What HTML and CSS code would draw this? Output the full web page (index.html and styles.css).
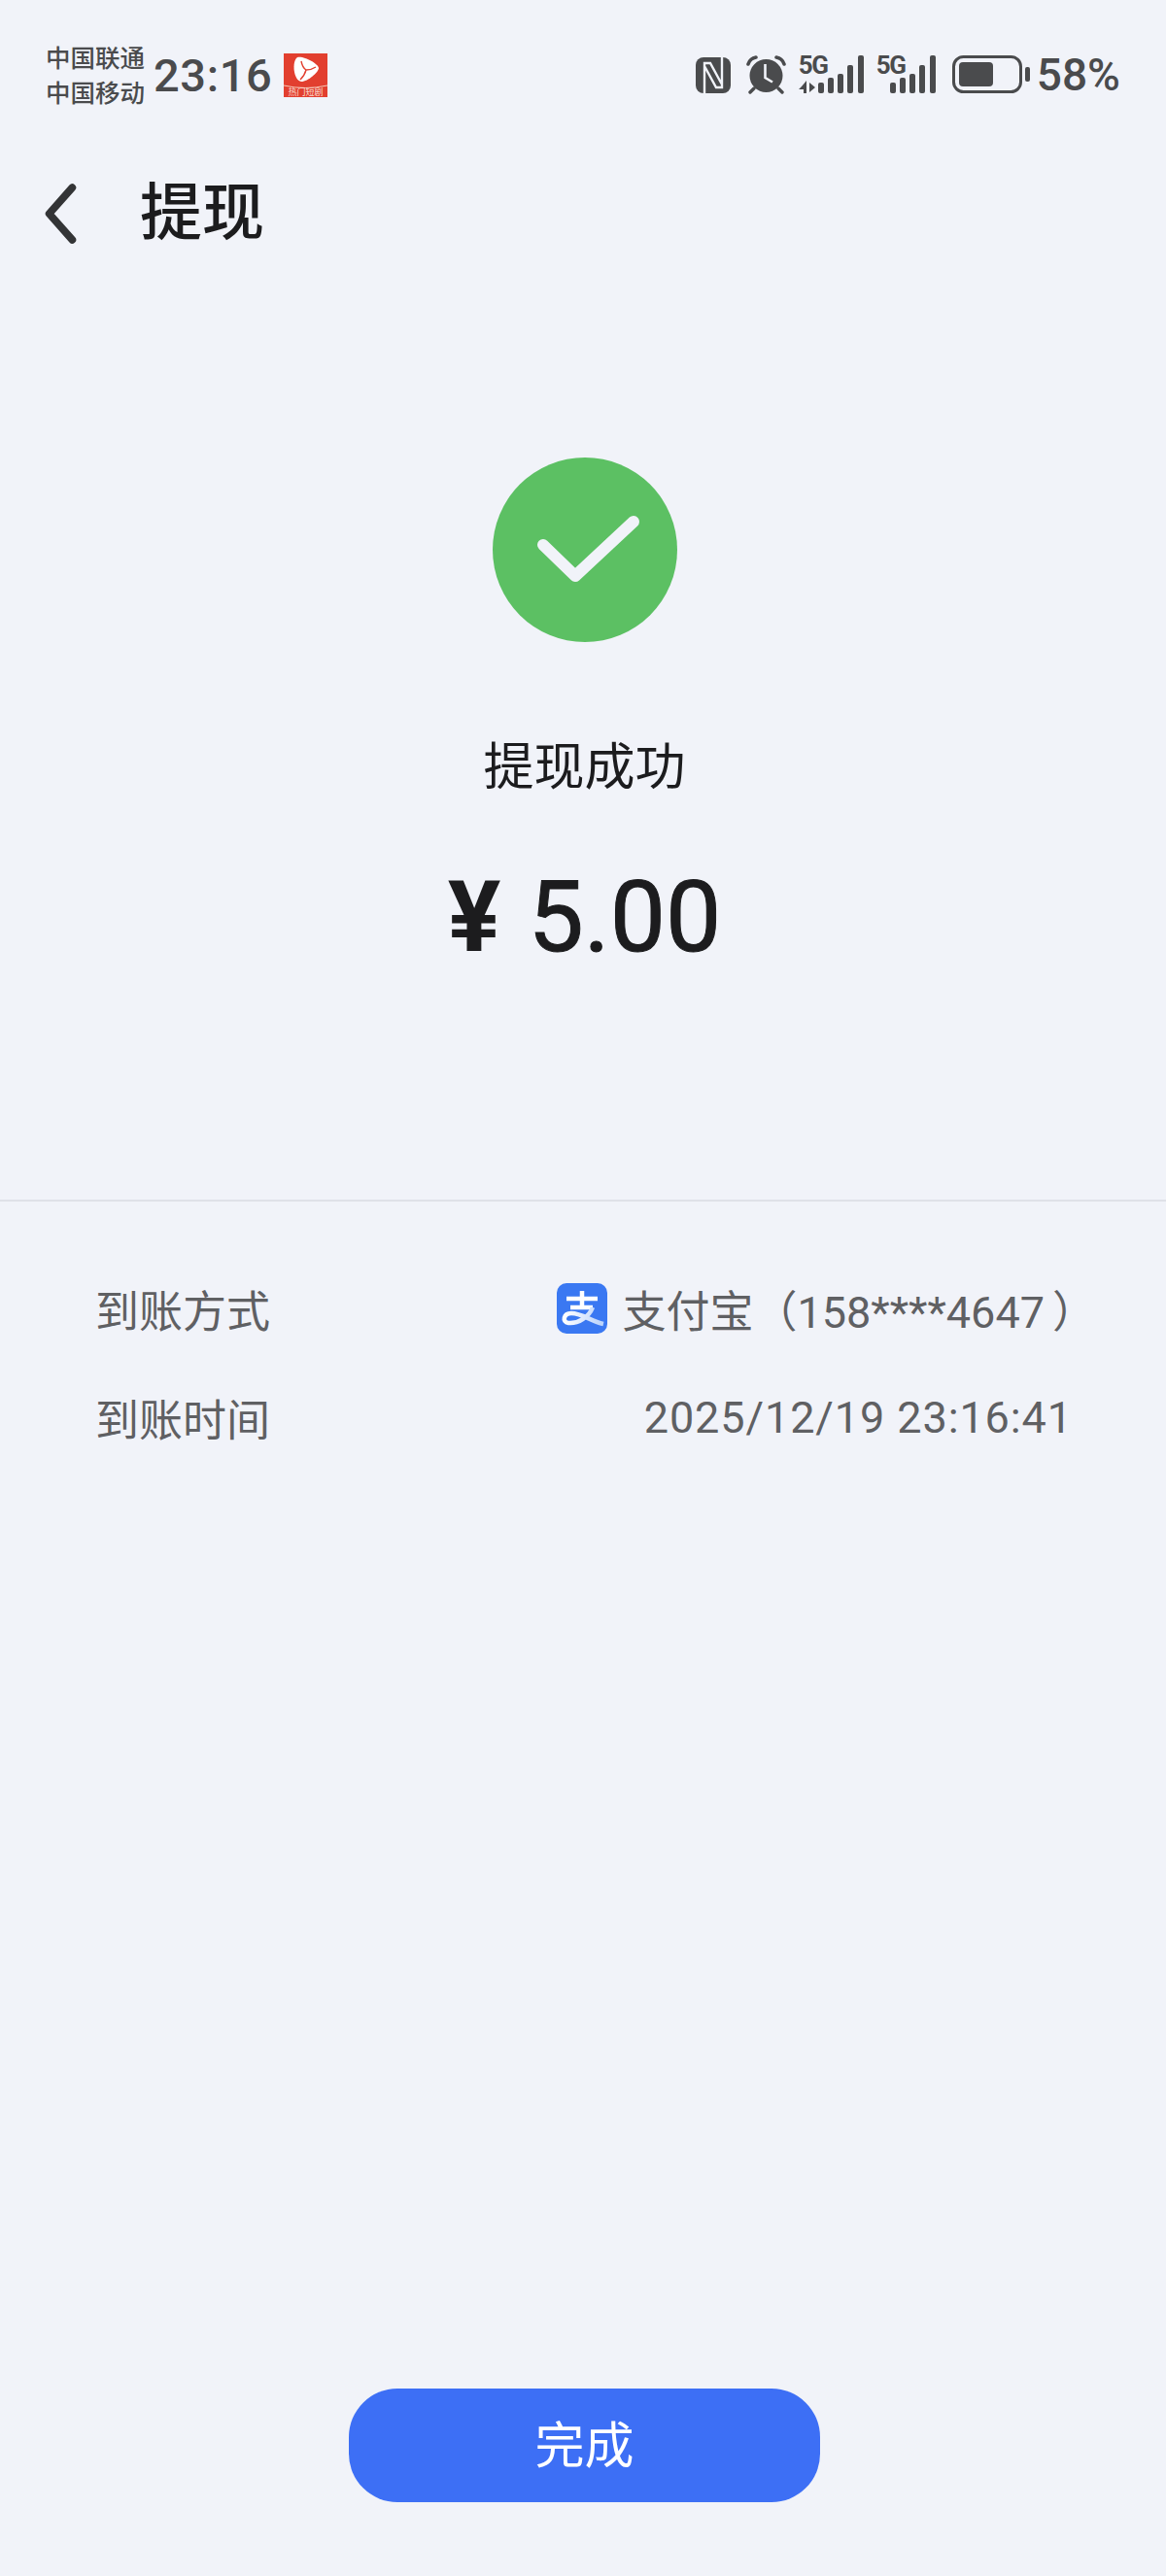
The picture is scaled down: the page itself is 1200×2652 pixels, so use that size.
FILE: index.html
```html
<!DOCTYPE html>
<html lang="zh-CN">
  <head>
    <meta charset="UTF-8" />
    <meta name="viewport" content="width=device-width, initial-scale=1.0" />
    <title>提现</title>
    <link rel="stylesheet" href="styles.css">
  </head>
  <body>
    <div class="page">
      <div class="status-bar">
        <div class="status-left">
          <div class="carriers">
            <div>中国联通</div>
            <div>中国移动</div>
          </div>
          <div class="clock">23:16</div>
          <svg class="app-badge" viewBox="0 0 45 45">
            <rect width="45" height="45" fill="#e23f2f" />
            <path d="M14 4 C20 2 35 10 36 15 C36 19 25 29 18 29 C10 28 8 8 14 4 Z" fill="#fff" />
            <path d="M18 8 C19 13 20 15 23 17 C27 17 30 16 33 14 M23 17 C22 21 20 24 17 27" fill="none" stroke="#e23f2f" stroke-width="1.4" />
            <path d="M0 33 Q22 38 45 33" fill="none" stroke="#f6c9b8" stroke-width="1" />
            <text x="22.5" y="43" text-anchor="middle" class="badge-text">热门短剧</text>
          </svg>
        </div>
        <div class="status-right">
          <svg class="icon-nfc" viewBox="0 0 36 37">
            <rect width="36" height="37" rx="8" fill="#4a4b4d" />
            <path d="M9 37 V6 H15 L27 28 M27 0 V31 H21 L9 9" fill="none" stroke="#f1f3f9" stroke-width="2.4" />
          </svg>
          <svg class="icon-alarm" viewBox="0 0 41 40">
            <circle cx="20.5" cy="21" r="17" fill="#4a4b4d" />
            <path d="M2 9 Q4 3 10 2 M39 9 Q37 3 31 2" fill="none" stroke="#4a4b4d" stroke-width="3.6" stroke-linecap="round" />
            <path d="M8 34 L4 38 M33 34 L37 38" stroke="#4a4b4d" stroke-width="3.4" stroke-linecap="round" />
            <path d="M19.5 9 V23 L27 27.5" fill="none" stroke="#f1f3f9" stroke-width="2.6" />
          </svg>
          <div class="signal signal-a">
            <span class="signal-text">5G</span>
            <svg viewBox="0 0 67 40">
              <path d="M3 32 L8 26 V39 H5 V35 H0 Z" fill="#4a4b4d" />
              <path d="M11 28 L17 33 L11 38 Z" fill="#4a4b4d" />
              <rect x="20" y="28" width="6" height="11" rx="2" fill="#4a4b4d" />
              <rect x="30" y="23" width="6" height="16" rx="2" fill="#4a4b4d" />
              <rect x="40" y="19" width="6" height="20" rx="2" fill="#4a4b4d" />
              <rect x="50" y="10" width="6" height="29" rx="2" fill="#4a4b4d" />
              <rect x="61" y="0" width="6" height="39" rx="2" fill="#4a4b4d" />
            </svg>
          </div>
          <div class="signal signal-b">
            <span class="signal-text">5G</span>
            <svg viewBox="0 0 61 40">
              <rect x="14" y="28" width="6" height="11" rx="2" fill="#4a4b4d" />
              <rect x="24" y="23" width="6" height="16" rx="2" fill="#4a4b4d" />
              <rect x="34" y="19" width="6" height="20" rx="2" fill="#4a4b4d" />
              <rect x="44" y="10" width="6" height="29" rx="2" fill="#4a4b4d" />
              <rect x="55" y="0" width="6" height="39" rx="2" fill="#4a4b4d" />
            </svg>
          </div>
          <svg class="icon-battery" viewBox="0 0 80 40">
            <rect x="1.5" y="1.5" width="69" height="36" rx="10" fill="none" stroke="#4a4b4d" stroke-width="3" />
            <rect x="7" y="7" width="35" height="25" rx="4" fill="#4a4b4d" />
            <rect x="75" y="12" width="5" height="15" rx="2" fill="#4a4b4d" />
          </svg>
          <div class="battery-level">58%</div>
        </div>
      </div>

      <div class="nav-bar">
        <svg class="back-icon" viewBox="0 0 32 60">
          <path d="M27 4 L4 30 L27 56" fill="none" stroke="#333436" stroke-width="7.5" stroke-linecap="round" stroke-linejoin="round" />
        </svg>
        <div class="nav-title">提现</div>
      </div>

      <div class="result">
        <svg class="success-icon" viewBox="0 0 190 190">
          <circle cx="95" cy="95" r="95" fill="#5cc063" />
          <path d="M52 90 L85 122 L145 66" fill="none" stroke="#f1f3f9" stroke-width="12" stroke-linecap="round" stroke-linejoin="round" />
        </svg>
        <div class="result-label">提现成功</div>
        <div class="result-amount">
          <span class="currency">¥</span>
          <span class="amount-value">5.00</span>
        </div>
      </div>

      <div class="details">
        <div class="detail-row">
          <div class="detail-label">到账方式</div>
          <div class="detail-value account">
            <svg class="alipay-icon" viewBox="0 0 52 52">
              <defs>
                <linearGradient id="swoosh" x1="0" y1="0" x2="1" y2="0">
                  <stop offset="0" stop-color="#fff" />
                  <stop offset="1" stop-color="#b9d2fb" />
                </linearGradient>
              </defs>
              <rect width="52" height="52" rx="10" fill="#3a78f2" />
              <path d="M10 16 H42 M26 8 V26 M14 25 H37" fill="none" stroke="#fff" stroke-width="4.5" />
              <path d="M37 25 C33 35 22 42 12 41 C5 40 7 31 15 31 C26 31 35 39 48 42" fill="none" stroke="url(#swoosh)" stroke-width="4.5" />
            </svg>
            <span>支付宝（158****4647<span class="close-paren">）</span></span>
          </div>
        </div>
        <div class="detail-row">
          <div class="detail-label">到账时间</div>
          <div class="detail-value time">2025/12/19 23:16:41</div>
        </div>
      </div>

      <div class="footer">
        <div class="done-button">完成</div>
      </div>
    </div>
  </body>
</html>
```

FILE: styles.css
```css
html,
body {
  margin: 0;
  padding: 0;
}

body {
  background: #f1f3f9;
  font-family: "Roboto", "Noto Sans CJK SC", sans-serif;
}

.page {
  width: 1200px;
  height: 2652px;
  display: flex;
  flex-direction: column;
}

.status-bar {
  display: flex;
  justify-content: space-between;
  align-items: center;
  height: 60px;
  padding: 47px 47px 0 47px;
  color: #4a4b4d;
}

.status-left {
  display: flex;
  align-items: center;
}

.carriers {
  font-size: 25.5px;
  line-height: 36px;
  font-weight: 500;
  padding-top: 1px;
}

.clock {
  font-size: 47px;
  font-weight: 500;
  letter-spacing: 0.6px;
  margin-left: 9px;
}

.app-badge {
  width: 45px;
  height: 45px;
  margin-left: 12px;
}

.badge-text {
  font-size: 9px;
  fill: #fbdcd0;
}

.status-right {
  display: flex;
  align-items: center;
}

.icon-nfc {
  width: 36px;
  height: 37px;
  margin-right: 16px;
}

.icon-alarm {
  width: 41px;
  height: 40px;
  margin-right: 13px;
}

.signal {
  position: relative;
  height: 40px;
}

.signal svg {
  display: block;
  width: 100%;
  height: 100%;
}

.signal-a {
  width: 67px;
  margin-right: 13px;
}

.signal-b {
  width: 61px;
  margin-right: 17px;
}

.signal-text {
  position: absolute;
  left: 0;
  top: 0;
  font-size: 26px;
  line-height: 20px;
  font-weight: 700;
  letter-spacing: -1.5px;
  color: #4a4b4d;
}

.icon-battery {
  width: 80px;
  height: 40px;
  margin-right: 7px;
}

.battery-level {
  font-size: 46px;
  font-weight: 500;
}

.nav-bar {
  display: flex;
  align-items: center;
  height: 62px;
  margin-top: 82px;
  padding-left: 46px;
}

.back-icon {
  width: 34px;
  height: 62px;
}

.nav-title {
  font-size: 64px;
  line-height: 62px;
  font-weight: 500;
  color: #1c1c1e;
  margin-left: 64px;
}

.result {
  display: flex;
  flex-direction: column;
  align-items: center;
  margin-top: 220px;
  padding-left: 3px;
}

.success-icon {
  width: 190px;
  height: 190px;
}

.result-label {
  font-size: 52px;
  line-height: 60px;
  color: #1c1c1e;
  margin-top: 100px;
}

.result-amount {
  display: flex;
  align-items: center;
  gap: 28px;
  font-size: 102px;
  line-height: 120px;
  color: #1c1c1e;
  margin-top: 63px;
}

.currency {
  font-weight: 700;
}

.amount-value {
  -webkit-text-stroke: 1px #1c1c1e;
}

.details {
  margin-top: 231px;
  padding: 82px 97px 0 98px;
  border-top: 2px solid #dfe1e8;
}

.detail-row {
  display: flex;
  justify-content: space-between;
  align-items: center;
  height: 56px;
  margin-bottom: 56px;
  font-size: 45px;
  color: #5f6063;
}

.detail-value {
  display: flex;
  align-items: center;
  gap: 15px;
}

.account {
  margin-right: -25px;
}

.close-paren {
  margin-left: 8px;
}

.time {
  letter-spacing: 0.9px;
  margin-right: -1px;
}

.alipay-icon {
  width: 52px;
  height: 52px;
}

.footer {
  margin-top: auto;
  padding-bottom: 76px;
  display: flex;
  justify-content: center;
  padding-left: 3px;
}

.done-button {
  width: 485px;
  height: 117px;
  box-sizing: border-box;
  padding-bottom: 8px;
  border-radius: 50px;
  background: #3d6ff5;
  color: #fff;
  font-size: 51px;
  display: flex;
  align-items: center;
  justify-content: center;
}
```
